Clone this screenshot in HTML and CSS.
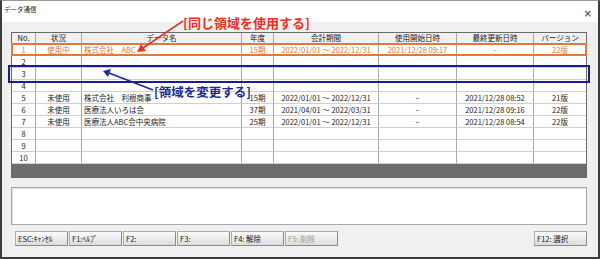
FILE: index.html
```html
<!DOCTYPE html>
<html lang="ja">
<head>
<meta charset="utf-8">
<link rel="stylesheet" href="styles.css">
</head>
<body>
<div class="win">
  <div class="titlebar">
    <span class="title">データ通信</span>
    <span class="close">×</span>
  </div>
  <div class="content">
    <div class="grid">
      <div class="tbl">
        <div class="h">No.</div><div class="h">状況</div><div class="h">データ名</div><div class="h">年度</div><div class="h">会計期間</div><div class="h">使用開始日時</div><div class="h">最終更新日時</div><div class="h last">バージョン</div>

        <div class="c o">1</div><div class="c o">使用中</div><div class="c l o">株式会社　ABC</div><div class="c o">15期</div><div class="c o">2022/01/01 ～ 2022/12/31</div><div class="c o">2021/12/28 09:17</div><div class="c o">–</div><div class="c o last">22版</div>

        <div class="c">2</div><div class="c"></div><div class="c l"></div><div class="c"></div><div class="c"></div><div class="c"></div><div class="c"></div><div class="c last"></div>

        <div class="c">3</div><div class="c"></div><div class="c l"></div><div class="c"></div><div class="c"></div><div class="c"></div><div class="c"></div><div class="c last"></div>

        <div class="c">4</div><div class="c"></div><div class="c l"></div><div class="c"></div><div class="c"></div><div class="c"></div><div class="c"></div><div class="c last"></div>

        <div class="c">5</div><div class="c">未使用</div><div class="c l">株式会社　利根商事</div><div class="c">15期</div><div class="c">2022/01/01 ～ 2022/12/31</div><div class="c">–</div><div class="c">2021/12/28 08:52</div><div class="c last">21版</div>

        <div class="c">6</div><div class="c">未使用</div><div class="c l">医療法人いろは会</div><div class="c">37期</div><div class="c">2021/04/01 ～ 2022/03/31</div><div class="c">–</div><div class="c">2021/12/28 09:16</div><div class="c last">22版</div>

        <div class="c">7</div><div class="c">未使用</div><div class="c l">医療法人ABC会中央病院</div><div class="c">25期</div><div class="c">2022/01/01 ～ 2022/12/31</div><div class="c">–</div><div class="c">2021/12/28 08:54</div><div class="c last">22版</div>

        <div class="c">8</div><div class="c"></div><div class="c l"></div><div class="c"></div><div class="c"></div><div class="c"></div><div class="c"></div><div class="c last"></div>

        <div class="c">9</div><div class="c"></div><div class="c l"></div><div class="c"></div><div class="c"></div><div class="c"></div><div class="c"></div><div class="c last"></div>

        <div class="c">10</div><div class="c"></div><div class="c l"></div><div class="c"></div><div class="c"></div><div class="c"></div><div class="c"></div><div class="c last"></div>
      </div>
    </div>
    <div class="msg"></div>
    <div class="btns">
      <div class="btn">ESC:ｷｬﾝｾﾙ</div>
      <div class="btn">F1:ﾍﾙﾌﾟ</div>
      <div class="btn">F2:</div>
      <div class="btn">F3:</div>
      <div class="btn">F4: 解除</div>
      <div class="btn dis">F5: 削除</div>
      <div class="spacer"></div>
      <div class="btn">F12: 選択</div>
    </div>
  </div>

  <div class="box-orange"></div>
  <div class="box-blue"></div>
  <svg class="arrows" width="600" height="259" viewBox="0 0 600 259">
    <line x1="183" y1="21" x2="143" y2="48" stroke="#e8321e" stroke-width="1.6"/>
    <polygon points="137,52 141,44 146,51" fill="#e8321e"/>
    <line x1="153" y1="90" x2="109" y2="73" stroke="#1c2b8f" stroke-width="1.6"/>
    <polygon points="103,71 111,69 108,77" fill="#1c2b8f"/>
  </svg>
  <div class="label-red">[同じ領域を使用する]</div>
  <div class="label-blue">[領域を変更する]</div>
</div>
</body>
</html>
```

FILE: styles.css
```css
* { box-sizing: border-box; }
html, body { margin: 0; padding: 0; background: #ffffff; }
body {
  font-family: "Noto Sans CJK JP", "Noto Sans", sans-serif;
  width: 600px;
  height: 259px;
  overflow: hidden;
}
.win {
  position: relative;
  width: 600px;
  height: 259px;
  background: #f0f0f0;
  border: 2px solid #3c3c3c;
  border-top: 1px solid #9a9a9a;
  display: flex;
  flex-direction: column;
}
.titlebar {
  height: 21px;
  background: #ffffff;
  display: flex;
  align-items: center;
  justify-content: space-between;
  padding: 0 6px 0 2px;
}
.title {
  font-size: 6.5px;
  color: #222;
  line-height: 8px;
  margin-top: -6px;
}
.close {
  font-family: "DejaVu Sans", sans-serif;
  font-size: 10px;
  color: #333;
  margin-top: 4px;
}
.content {
  flex: 1;
  padding: 10px 11px 0 9px;
  display: flex;
  flex-direction: column;
}
.grid {
  height: 146px;
  border: 1px solid #6a6a6a;
  background: #6d6d6d;
}
.tbl {
  display: grid;
  grid-template-columns: 24px 46px 160px 32px 105px 78px 77px 52px;
  grid-auto-rows: 12px;
  grid-template-rows: 11px;
  background: #ffffff;
  font-size: 7.5px;
  color: #1a1a1a;
}
.h {
  background: #f0f0f0;
  border-right: 1px solid #a8a8a8;
  border-bottom: 1px solid #a8a8a8;
  text-align: center;
  line-height: 10px;
  white-space: nowrap;
  overflow: hidden;
}
.c {
  border-right: 1px solid #a8a8a8;
  border-bottom: 1px solid #cfcfcf;
  text-align: center;
  line-height: 11px;
  white-space: nowrap;
  overflow: hidden;
}
.c.l { text-align: left; padding-left: 2px; }
.c.o { color: #d8763c; }
.last { border-right: none; }
.msg {
  margin-top: 9px;
  height: 38px;
  background: #ffffff;
  border: 1px solid #a9a9a9;
  box-shadow: inset 1px 1px 0 #e3e3e3;
}
.btns {
  margin-top: 6px;
  padding-left: 4px;
  display: flex;
  gap: 1px;
}
.btn {
  width: 53px;
  height: 15px;
  border: 1px solid #acacac;
  border-right-color: #8a8a8a;
  border-bottom-color: #8a8a8a;
  background: linear-gradient(#fbfbfb, #dcdcdc);
  font-size: 7.5px;
  line-height: 13px;
  padding-left: 2px;
  color: #1a1a1a;
  white-space: nowrap;
}
.btn.dis { color: #9a9a9a; }
.spacer { flex: 1; }
.box-orange {
  position: absolute;
  left: 9px;
  top: 42px;
  width: 576px;
  height: 13px;
  border: 2px solid #e07a3a;
}
.box-blue {
  position: absolute;
  left: 6px;
  top: 64px;
  width: 582px;
  height: 18px;
  border: 2px solid #1c1c8c;
}
.arrows {
  position: absolute;
  left: -2px;
  top: -1px;
}
.label-red {
  position: absolute;
  left: 181px;
  top: 14px;
  font-size: 13px;
  font-weight: bold;
  color: #e8321e;
  line-height: 16px;
  white-space: nowrap;
}
.label-blue {
  position: absolute;
  left: 152px;
  top: 83px;
  font-size: 12.5px;
  font-weight: bold;
  color: #1c2b8f;
  line-height: 16px;
  white-space: nowrap;
}
```
